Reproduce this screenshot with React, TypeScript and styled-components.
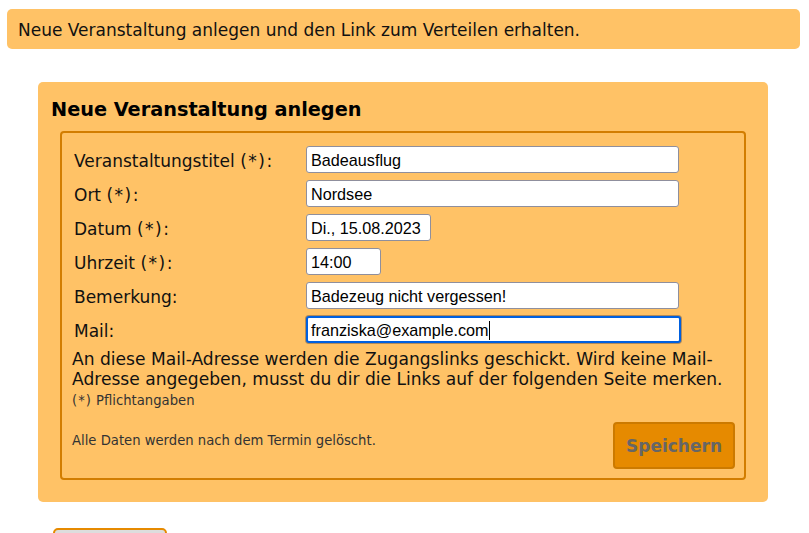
import React from "react";
import styled, { createGlobalStyle } from "styled-components";

const Global = createGlobalStyle`
  html, body { margin: 0; padding: 0; background: #fff; }
  body { font-family: "DejaVu Sans", Verdana, sans-serif; color: #000; }
  * { box-sizing: border-box; }
`;

const Page = styled.div`
  padding: 9px 9px 0 7px;
  height: 533px;
  overflow: hidden;
`;

const Banner = styled.div`
  height: 40px;
  line-height: 38px;
  padding: 2px 11px 0;
  background: #ffc266;
  border-radius: 5px;
  font-size: 17px;
  color: #111;
`;

const Card = styled.section`
  margin: 33px 0 0 31px;
  width: 730px;
  height: 420px;
  padding: 16px 13px 0;
  background: #ffc266;
  border-radius: 5px;
`;

const Heading = styled.h2`
  margin: 0 0 10px;
  font-size: 19.3px;
  line-height: 23px;
  font-weight: bold;
  color: #000;
`;

const Fieldset = styled.fieldset`
  margin: 0 9px;
  height: 349px;
  padding: 13px 9px 10px 10px;
  border: 2px solid #d27d00;
  border-radius: 4px;
  display: flex;
  flex-direction: column;
`;

const FormGrid = styled.div`
  display: grid;
  grid-template-columns: 234px 1fr;
  row-gap: 7px;
  align-items: center;
`;

const Label = styled.label`
  padding: 3px 0 0 2px;
  font-size: 17px;
  line-height: 24px;
  color: #111;
`;

const Req = styled.span<{ $ls?: number }>`
  letter-spacing: ${(p) => p.$ls ?? 1.5}px;
`;

const Input = styled.input<{ $w: number }>`
  width: ${(p) => p.$w}px;
  height: 27px;
  padding: 1px 4px 0;
  border: 1px solid #8f8f9d;
  border-radius: 3px;
  background: #fff;
  font-family: "Liberation Sans", Arial, sans-serif;
  font-size: 16.2px;
  color: #000;
  outline: none;
`;

const FocusedField = styled.div<{ $w: number }>`
  width: ${(p) => p.$w}px;
  height: 27px;
  padding: 1px 3px 0;
  border: 2px solid #0060df;
  border-radius: 3px;
  box-shadow: 0 0 0 1px #b08a5a;
  background: #fff;
  display: flex;
  align-items: center;
  font-family: "Liberation Sans", Arial, sans-serif;
  font-size: 16.2px;
  color: #000;
`;

const Caret = styled.span`
  display: inline-block;
  width: 1px;
  height: 19px;
  background: #000;
  margin-left: 1px;
`;

const Note = styled.p`
  margin: 6px 0 0;
  font-size: 17.1px;
  line-height: 20px;
  color: #111;
  white-space: nowrap;
`;

const Small = styled.p`
  margin: 4px 0 0;
  font-size: 13.2px;
  line-height: 16px;
  color: #333;
`;

const FooterRow = styled.div`
  margin-top: 13px;
  display: flex;
  justify-content: space-between;
  align-items: flex-start;
`;

const SmallInline = styled.span`
  margin-top: 11px;
  font-size: 13.2px;
  line-height: 16px;
  color: #333;
`;

const SaveButton = styled.button`
  width: 122px;
  height: 47px;
  background: #e68a00;
  border: 2px solid #cc7a00;
  border-radius: 4px;
  font-family: "DejaVu Sans", Verdana, sans-serif;
  font-weight: bold;
  font-size: 17px;
  color: #666;
  padding: 0;
  cursor: pointer;
`;

const BackButton = styled.button`
  display: block;
  margin: 26px 0 0 46px;
  width: 114px;
  height: 32px;
  background: #ddd;
  border: 2px solid #e68a00;
  border-radius: 5px;
`;

const fields: { label: string; req: boolean; value: string; w: number }[] = [
  { label: "Veranstaltungstitel", req: true, value: "Badeausflug", w: 373 },
  { label: "Ort", req: true, value: "Nordsee", w: 373 },
  { label: "Datum", req: true, value: "Di., 15.08.2023", w: 125 },
  { label: "Uhrzeit", req: true, value: "14:00", w: 75 },
  { label: "Bemerkung", req: false, value: "Badezeug nicht vergessen!", w: 373 },
];

export default function App() {
  return (
    <>
      <Global />
      <Page>
        <Banner>Neue Veranstaltung anlegen und den Link zum Verteilen erhalten.</Banner>
        <Card>
          <Heading>Neue Veranstaltung anlegen</Heading>
          <Fieldset>
            <FormGrid>
              {fields.map((f) => (
                <React.Fragment key={f.label}>
                  <Label>
                    {f.label}
                    {f.req ? (
                      <>
                        {" "}
                        <Req>(*)</Req>
                      </>
                    ) : null}
                    :
                  </Label>
                  <Input $w={f.w} defaultValue={f.value} readOnly />
                </React.Fragment>
              ))}
              <Label>Mail:</Label>
              <FocusedField $w={375}>
                franziska@example.com
                <Caret />
              </FocusedField>
            </FormGrid>
            <Note>
              An diese Mail-Adresse werden die Zugangslinks geschickt. Wird keine Mail-
              <br />
              Adresse angegeben, musst du dir die Links auf der folgenden Seite merken.
            </Note>
            <Small>
              <Req $ls={1}>(*)</Req> Pflichtangaben
            </Small>
            <FooterRow>
              <SmallInline>Alle Daten werden nach dem Termin gelöscht.</SmallInline>
              <SaveButton>Speichern</SaveButton>
            </FooterRow>
          </Fieldset>
        </Card>
        <BackButton aria-label="Zurück" />
      </Page>
    </>
  );
}
